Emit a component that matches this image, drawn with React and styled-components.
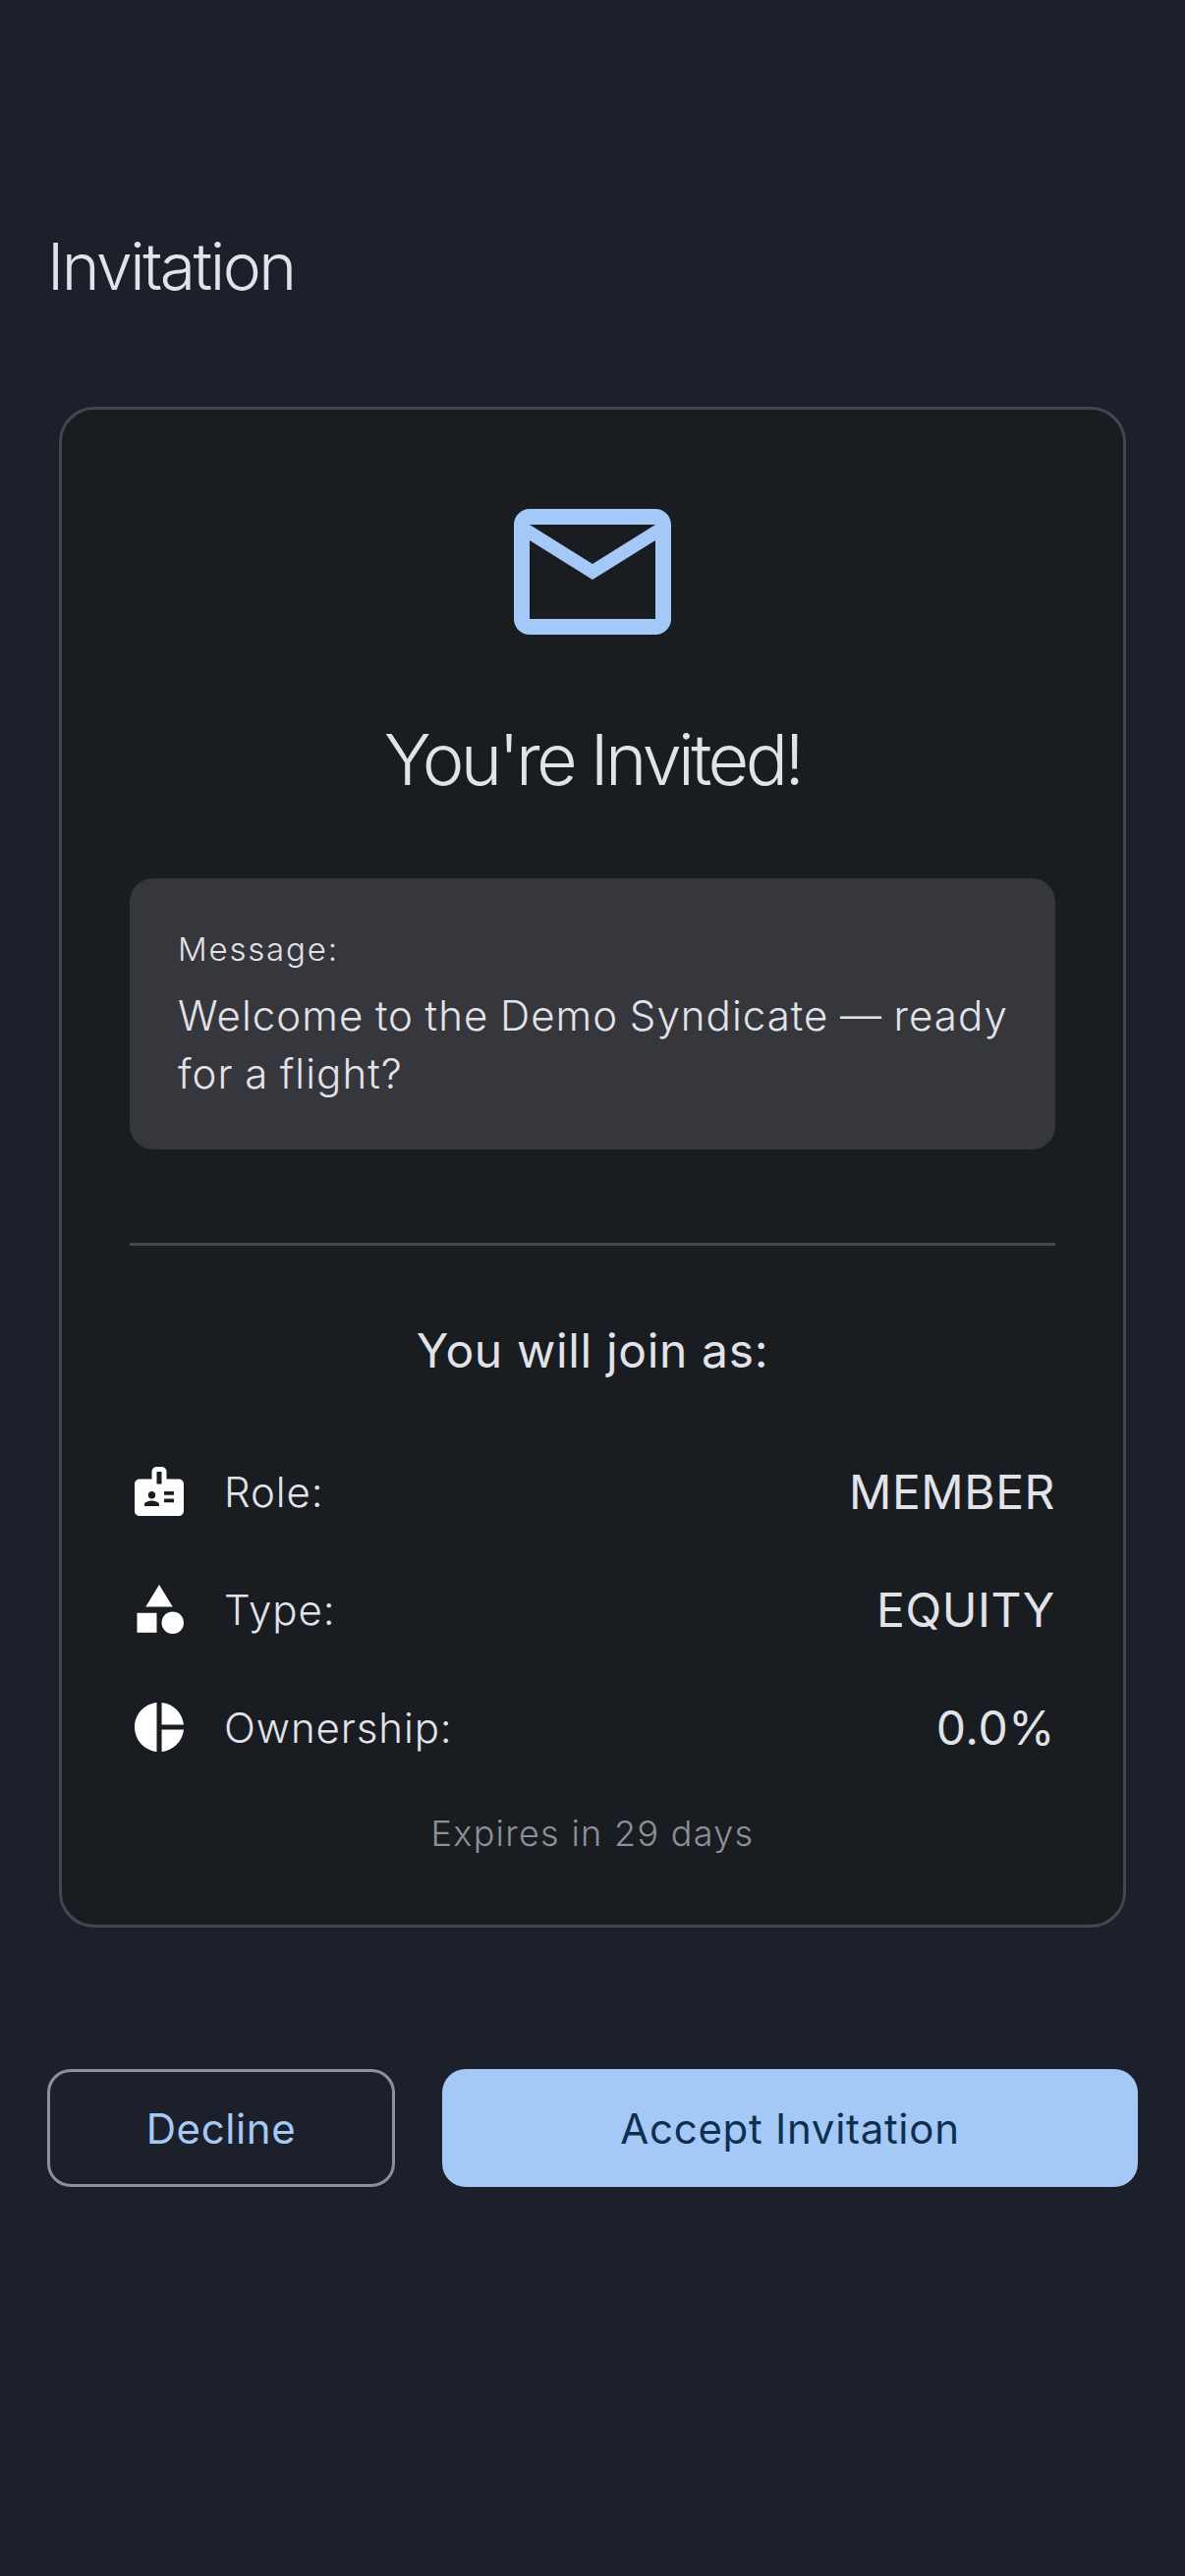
import React from "react";
import styled, { createGlobalStyle } from "styled-components";

const Global = createGlobalStyle`
  html, body { margin: 0; padding: 0; background: #1c202b; }
  * { box-sizing: border-box; }
  #root { width: 1206px; height: 2622px; overflow: hidden; }
`;

const Page = styled.div`
  width: 1206px;
  height: 2622px;
  background: #1c202b;
  font-family: Inter, "Noto Sans", sans-serif;
  color: #e2e2e9;
  padding: 223px 48px 0;
  display: flex;
  flex-direction: column;
`;
const Title = styled.h1`
  margin: 0;
  height: 96px;
  line-height: 96px;
  font-size: 66px;
  font-weight: 280;
  letter-spacing: -2.5px;
`;
const Card = styled.section`
  margin: 95px 12px 0;
  height: 1548px;
  background: #191c20;
  border: 3px solid #44474e;
  border-radius: 36px;
  padding: 85px 69px 0;
  display: flex;
  flex-direction: column;
`;
const MailIcon = styled.svg`
  align-self: center;
  width: 192px;
  height: 192px;
  margin-top: -16px;
  fill: #a5c9f7;
  display: block;
`;
const Heading = styled.h2`
  margin: 47px 0 0;
  height: 96px;
  line-height: 96px;
  font-size: 72px;
  font-weight: 280;
  letter-spacing: -3.6px;
  text-align: center;
`;
const MessageBox = styled.div`
  margin-top: 73px;
  height: 276px;
  background: #36373c;
  border-radius: 24px;
  padding: 48px 30px 0 49px;
`;
const MessageLabel = styled.div`
  height: 48px;
  line-height: 48px;
  font-size: 33px;
  font-weight: 350;
  letter-spacing: 1.8px;
  color: #e2e2e9;
`;
const MessageText = styled.p`
  margin: 14px 0 0;
  font-size: 42px;
  font-weight: 350;
  line-height: 59px;
  letter-spacing: 1.05px;
  word-spacing: -1.3px;
  color: #e2e2e9;
`;
const Divider = styled.hr`
  margin: 95px 0 0;
  border: 0;
  height: 3px;
  background: #44474e;
`;
const JoinHeading = styled.h3`
  margin: 74px 0 0;
  height: 66px;
  line-height: 66px;
  font-size: 48px;
  font-weight: 380;
  letter-spacing: 0.65px;
  text-align: center;
`;
const Rows = styled.div`
  margin-top: 50px;
  display: flex;
  flex-direction: column;
`;
const Row = styled.div`
  height: 120px;
  display: flex;
  align-items: center;
`;
const RowIcon = styled.svg`
  width: 60px;
  height: 60px;
  fill: #fff;
  flex: none;
  margin-right: 36px;
`;
const RowLabel = styled.span`
  flex: 1;
  font-size: 42px;
  font-weight: 350;
  letter-spacing: 0.9px;
  color: #e2e2e9;
`;
const RowValue = styled.span`
  font-size: 48px;
  font-weight: 380;
  letter-spacing: 0.55px;
  color: #e2e2e9;
`;
const Expires = styled.div`
  margin-top: 24px;
  height: 48px;
  line-height: 48px;
  text-align: center;
  font-size: 36px;
  font-weight: 350;
  letter-spacing: 1.3px;
  color: #8e9099;
`;
const Actions = styled.div`
  margin-top: 144px;
  display: grid;
  grid-template-columns: 1fr 2fr;
  gap: 48px;
`;
const Decline = styled.button`
  height: 120px;
  padding: 0;
  border-radius: 24px;
  border: 3px solid #8e9099;
  background: transparent;
  color: #a5c9f7;
  font-family: inherit;
  font-size: 42px;
  font-weight: 420;
  letter-spacing: 0.6px;
`;
const Accept = styled.button`
  height: 120px;
  padding: 0;
  border-radius: 24px;
  border: 0;
  background: #a5c9f7;
  color: #0d3050;
  font-family: inherit;
  font-size: 42px;
  font-weight: 420;
  letter-spacing: 0.7px;
`;

export default function App() {
  return (
    <Page>
      <Global />
      <Title>Invitation</Title>
      <Card>
        <MailIcon viewBox="0 0 24 24">
          <path d="M20 4H4c-1.1 0-2 .9-2 2v12c0 1.1.9 2 2 2h16c1.1 0 2-.9 2-2V6c0-1.1-.9-2-2-2zm0 14H4V8l8 5 8-5v10zm-8-7L4 6h16l-8 5z" />
        </MailIcon>
        <Heading>You're Invited!</Heading>
        <MessageBox>
          <MessageLabel>Message:</MessageLabel>
          <MessageText>Welcome to the Demo Syndicate — ready for a flight?</MessageText>
        </MessageBox>
        <Divider />
        <JoinHeading>You will join as:</JoinHeading>
        <Rows>
          <Row>
            <RowIcon viewBox="0 0 24 24">
              <path d="M20 7h-5V4c0-1.1-.9-2-2-2h-2c-1.1 0-2 .9-2 2v3H4c-1.1 0-2 .9-2 2v11c0 1.1.9 2 2 2h16c1.1 0 2-.9 2-2V9c0-1.1-.9-2-2-2zM9 12c.83 0 1.5.67 1.5 1.5S9.83 15 9 15s-1.5-.67-1.5-1.5S8.17 12 9 12zm3 6H6v-.75c0-1 2-1.5 3-1.5s3 .5 3 1.5V18zm1-9h-2V4h2v5zm5 7.5h-4V15h4v1.5zm0-3h-4V12h4v1.5z" />
            </RowIcon>
            <RowLabel>Role:</RowLabel>
            <RowValue>MEMBER</RowValue>
          </Row>
          <Row>
            <RowIcon viewBox="0 0 24 24">
              <path d="M12 2l-5.5 9h11z" />
              <circle cx="17.5" cy="17.5" r="4.5" />
              <path d="M3 13.5h8v8H3z" />
            </RowIcon>
            <RowLabel>Type:</RowLabel>
            <RowValue>EQUITY</RowValue>
          </Row>
          <Row>
            <RowIcon viewBox="0 0 24 24">
              <path d="M11 2v20c-5.07-.5-9-4.79-9-10s3.93-9.5 9-10zm2.03 0v8.99H22c-.47-4.74-4.24-8.52-8.97-8.99zm0 11.01V22c4.74-.47 8.5-4.25 8.97-8.99h-8.97z" />
            </RowIcon>
            <RowLabel>Ownership:</RowLabel>
            <RowValue>0.0%</RowValue>
          </Row>
        </Rows>
        <Expires>Expires in 29 days</Expires>
      </Card>
      <Actions>
        <Decline>Decline</Decline>
        <Accept>Accept Invitation</Accept>
      </Actions>
    </Page>
  );
}
